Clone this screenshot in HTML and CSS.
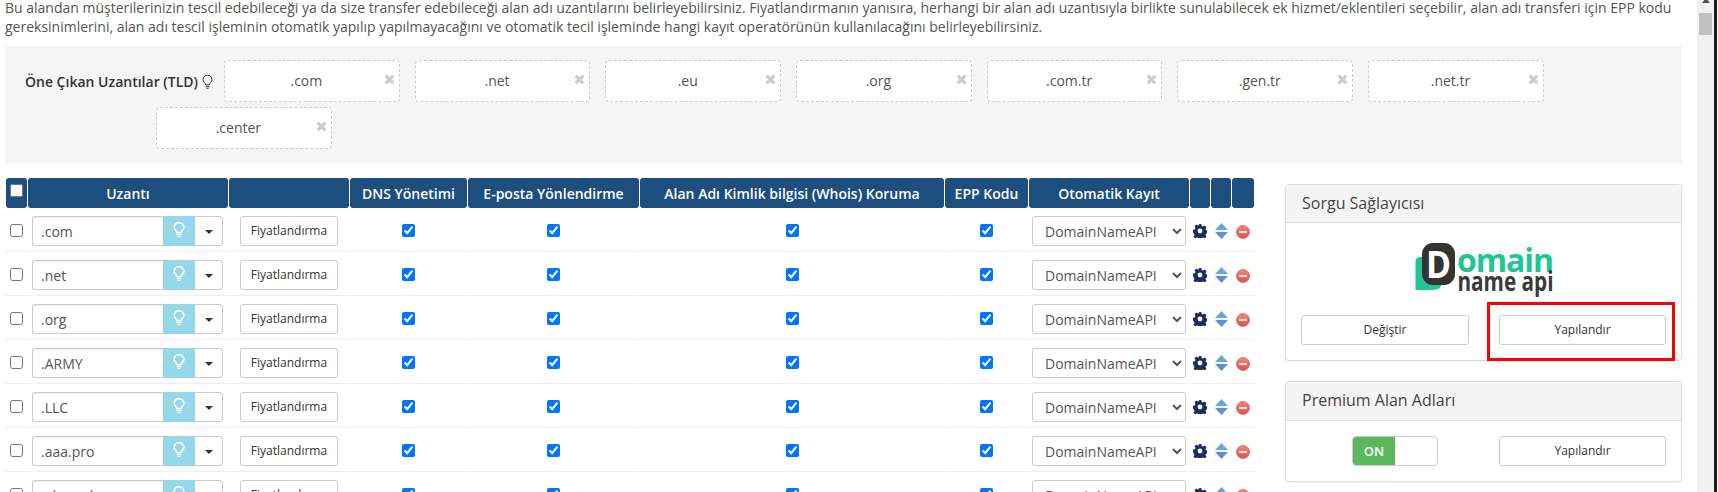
FILE: index.html
```html
<!DOCTYPE html>
<html lang="tr">
<head>
    <meta charset="UTF-8">
    <title>Alan Adı Fiyatlandırma</title>
    <link rel="stylesheet" href="styles.css">
</head>
<body>

<svg class="icon-defs" width="0" height="0">
    <defs>
        <linearGradient id="g-remove" x1="0" y1="0" x2="0" y2="1">
            <stop offset="0" stop-color="#ef8a80"/>
            <stop offset="1" stop-color="#dc5047"/>
        </linearGradient>
    </defs>
    <symbol id="i-bulb" viewBox="0 0 14 18">
        <path d="M4.600 12.200C4.400 10 1.400 9 1.400 6a5.600 5.600 0 0 1 11.200 0c0 3-3 4-3.200 6.200z" fill="none" stroke="currentColor" stroke-width="1.900"/>
        <path d="M4.400 13.600h5.200v1.500H4.400zM5.400 16h3.200v1.200H5.400z" fill="currentColor"/>
    </symbol>
    <symbol id="i-bulb-thin" viewBox="0 0 14 20">
        <path d="M4.600 13.200C4.400 10.500 1 9.500 1 6.200a6 6 0 0 1 12 0c0 3.300-3.400 4.300-3.600 7z" fill="none" stroke="currentColor" stroke-width="1.300"/>
        <path d="M4.600 15h4.800v1.300H4.600zM5.500 17.500h3v1.300h-3z" fill="currentColor"/>
    </symbol>
    <symbol id="i-gear" viewBox="0 0 14 14">
        <path d="M5.700 0h2.600l.4 1.900 1.300.6 1.700-1 1.800 1.800-1 1.700.6 1.300 1.900.4v2.600l-1.900.4-.6 1.300 1 1.700-1.800 1.800-1.700-1-1.300.6-.4 1.900H5.700l-.4-1.900-1.300-.6-1.700 1-1.800-1.800 1-1.700-.6-1.300L0 8.300V5.700l1.900-.4.6-1.300-1-1.700 1.800-1.800 1.700 1 1.300-.6zM7 4.600a2.400 2.400 0 1 0 0 4.800a2.400 2.400 0 0 0 0-4.800z" fill="#1b2d66" fill-rule="evenodd"/>
    </symbol>
    <symbol id="i-sort" viewBox="0 0 13 16">
        <path d="M6.500 0L13 7H0z" fill="#6aa6de"/>
        <path d="M0 9h13l-6.500 7z" fill="#5a93cc"/>
    </symbol>
    <symbol id="i-remove" viewBox="0 0 14 14">
        <circle cx="7" cy="7" r="6.500" fill="url(#g-remove)" stroke="#d9655c" stroke-width="0.800"/>
        <path d="M3.200 6h7.600v2H3.200z" fill="#fbe9e7"/>
    </symbol>
    <symbol id="i-close" viewBox="0 0 10 10">
        <path d="M1.500 1.500l7 7M8.500 1.500l-7 7" stroke="#ccc" stroke-width="3" fill="none"/>
    </symbol>
</svg>

<div class="layout">
<div class="page">

    <p class="intro">Bu alandan müşterilerinizin tescil edebileceği ya da size transfer edebileceği alan adı uzantılarını belirleyebilirsiniz. Fiyatlandırmanın yanısıra, herhangi bir alan adı uzantısıyla birlikte sunulabilecek ek hizmet/eklentileri seçebilir, alan adı transferi için EPP kodu gereksinimlerini, alan adı tescil işleminin otomatik yapılıp yapılmayacağını ve otomatik tecil işleminde hangi kayıt operatörünün kullanılacağını belirleyebilirsiniz.</p>

    <div class="tld-box">
        <div class="tld-label">Öne Çıkan Uzantılar (TLD) <svg class="tld-bulb"><use href="#i-bulb-thin"/></svg></div>
        <div class="tag">.com<svg class="tag-x"><use href="#i-close"/></svg></div>
        <div class="tag">.net<svg class="tag-x"><use href="#i-close"/></svg></div>
        <div class="tag">.eu<svg class="tag-x"><use href="#i-close"/></svg></div>
        <div class="tag">.org<svg class="tag-x"><use href="#i-close"/></svg></div>
        <div class="tag">.com.tr<svg class="tag-x"><use href="#i-close"/></svg></div>
        <div class="tag">.gen.tr<svg class="tag-x"><use href="#i-close"/></svg></div>
        <div class="tag">.net.tr<svg class="tag-x"><use href="#i-close"/></svg></div>
        <div class="tag tag-wrapped">.center<svg class="tag-x"><use href="#i-close"/></svg></div>
    </div>

    <div class="content">
        <table class="tld-table">
            <colgroup>
                <col class="c-check"><col class="c-ext"><col class="c-price"><col class="c-dns"><col class="c-mail"><col class="c-whois"><col class="c-epp"><col class="c-auto"><col class="c-ic"><col class="c-ic"><col class="c-ic-last">
            </colgroup>
            <thead>
            <tr>
                <th><input class="check" type="checkbox"></th>
                <th>Uzantı</th>
                <th></th>
                <th>DNS Yönetimi</th>
                <th>E-posta Yönlendirme</th>
                <th>Alan Adı Kimlik bilgisi (Whois) Koruma</th>
                <th>EPP Kodu</th>
                <th>Otomatik Kayıt</th>
                <th></th>
                <th></th>
                <th></th>
            </tr>
            </thead>
            <tbody>
            <tr>
                <td class="td-mid"><input class="check" type="checkbox"></td>
                <td><div class="ext-group"><input class="ext-input" type="text" value=".com"><span class="ext-bulb"><svg><use href="#i-bulb"/></svg></span><span class="ext-caret"></span></div></td>
                <td><div class="btn btn-price">Fiyatlandırma</div></td>
                <td class="td-mid"><input class="check" type="checkbox" checked></td>
                <td class="td-mid"><input class="check" type="checkbox" checked></td>
                <td class="td-mid"><input class="check" type="checkbox" checked></td>
                <td class="td-mid"><input class="check" type="checkbox" checked></td>
                <td><select class="registrar"><option>DomainNameAPI</option></select></td>
                <td class="td-mid"><svg class="ic ic-gear"><use href="#i-gear"/></svg></td>
                <td class="td-mid"><svg class="ic ic-sort"><use href="#i-sort"/></svg></td>
                <td class="td-mid"><svg class="ic ic-remove"><use href="#i-remove"/></svg></td>
            </tr>
            <tr>
                <td class="td-mid"><input class="check" type="checkbox"></td>
                <td><div class="ext-group"><input class="ext-input" type="text" value=".net"><span class="ext-bulb"><svg><use href="#i-bulb"/></svg></span><span class="ext-caret"></span></div></td>
                <td><div class="btn btn-price">Fiyatlandırma</div></td>
                <td class="td-mid"><input class="check" type="checkbox" checked></td>
                <td class="td-mid"><input class="check" type="checkbox" checked></td>
                <td class="td-mid"><input class="check" type="checkbox" checked></td>
                <td class="td-mid"><input class="check" type="checkbox" checked></td>
                <td><select class="registrar"><option>DomainNameAPI</option></select></td>
                <td class="td-mid"><svg class="ic ic-gear"><use href="#i-gear"/></svg></td>
                <td class="td-mid"><svg class="ic ic-sort"><use href="#i-sort"/></svg></td>
                <td class="td-mid"><svg class="ic ic-remove"><use href="#i-remove"/></svg></td>
            </tr>
            <tr>
                <td class="td-mid"><input class="check" type="checkbox"></td>
                <td><div class="ext-group"><input class="ext-input" type="text" value=".org"><span class="ext-bulb"><svg><use href="#i-bulb"/></svg></span><span class="ext-caret"></span></div></td>
                <td><div class="btn btn-price">Fiyatlandırma</div></td>
                <td class="td-mid"><input class="check" type="checkbox" checked></td>
                <td class="td-mid"><input class="check" type="checkbox" checked></td>
                <td class="td-mid"><input class="check" type="checkbox" checked></td>
                <td class="td-mid"><input class="check" type="checkbox" checked></td>
                <td><select class="registrar"><option>DomainNameAPI</option></select></td>
                <td class="td-mid"><svg class="ic ic-gear"><use href="#i-gear"/></svg></td>
                <td class="td-mid"><svg class="ic ic-sort"><use href="#i-sort"/></svg></td>
                <td class="td-mid"><svg class="ic ic-remove"><use href="#i-remove"/></svg></td>
            </tr>
            <tr>
                <td class="td-mid"><input class="check" type="checkbox"></td>
                <td><div class="ext-group"><input class="ext-input" type="text" value=".ARMY"><span class="ext-bulb"><svg><use href="#i-bulb"/></svg></span><span class="ext-caret"></span></div></td>
                <td><div class="btn btn-price">Fiyatlandırma</div></td>
                <td class="td-mid"><input class="check" type="checkbox" checked></td>
                <td class="td-mid"><input class="check" type="checkbox" checked></td>
                <td class="td-mid"><input class="check" type="checkbox" checked></td>
                <td class="td-mid"><input class="check" type="checkbox" checked></td>
                <td><select class="registrar"><option>DomainNameAPI</option></select></td>
                <td class="td-mid"><svg class="ic ic-gear"><use href="#i-gear"/></svg></td>
                <td class="td-mid"><svg class="ic ic-sort"><use href="#i-sort"/></svg></td>
                <td class="td-mid"><svg class="ic ic-remove"><use href="#i-remove"/></svg></td>
            </tr>
            <tr>
                <td class="td-mid"><input class="check" type="checkbox"></td>
                <td><div class="ext-group"><input class="ext-input" type="text" value=".LLC"><span class="ext-bulb"><svg><use href="#i-bulb"/></svg></span><span class="ext-caret"></span></div></td>
                <td><div class="btn btn-price">Fiyatlandırma</div></td>
                <td class="td-mid"><input class="check" type="checkbox" checked></td>
                <td class="td-mid"><input class="check" type="checkbox" checked></td>
                <td class="td-mid"><input class="check" type="checkbox" checked></td>
                <td class="td-mid"><input class="check" type="checkbox" checked></td>
                <td><select class="registrar"><option>DomainNameAPI</option></select></td>
                <td class="td-mid"><svg class="ic ic-gear"><use href="#i-gear"/></svg></td>
                <td class="td-mid"><svg class="ic ic-sort"><use href="#i-sort"/></svg></td>
                <td class="td-mid"><svg class="ic ic-remove"><use href="#i-remove"/></svg></td>
            </tr>
            <tr>
                <td class="td-mid"><input class="check" type="checkbox"></td>
                <td><div class="ext-group"><input class="ext-input" type="text" value=".aaa.pro"><span class="ext-bulb"><svg><use href="#i-bulb"/></svg></span><span class="ext-caret"></span></div></td>
                <td><div class="btn btn-price">Fiyatlandırma</div></td>
                <td class="td-mid"><input class="check" type="checkbox" checked></td>
                <td class="td-mid"><input class="check" type="checkbox" checked></td>
                <td class="td-mid"><input class="check" type="checkbox" checked></td>
                <td class="td-mid"><input class="check" type="checkbox" checked></td>
                <td><select class="registrar"><option>DomainNameAPI</option></select></td>
                <td class="td-mid"><svg class="ic ic-gear"><use href="#i-gear"/></svg></td>
                <td class="td-mid"><svg class="ic ic-sort"><use href="#i-sort"/></svg></td>
                <td class="td-mid"><svg class="ic ic-remove"><use href="#i-remove"/></svg></td>
            </tr>
            <tr>
                <td class="td-mid"><input class="check" type="checkbox"></td>
                <td><div class="ext-group"><input class="ext-input" type="text" value=".abogado"><span class="ext-bulb"><svg><use href="#i-bulb"/></svg></span><span class="ext-caret"></span></div></td>
                <td><div class="btn btn-price">Fiyatlandırma</div></td>
                <td class="td-mid"><input class="check" type="checkbox" checked></td>
                <td class="td-mid"><input class="check" type="checkbox" checked></td>
                <td class="td-mid"><input class="check" type="checkbox" checked></td>
                <td class="td-mid"><input class="check" type="checkbox" checked></td>
                <td><select class="registrar"><option>DomainNameAPI</option></select></td>
                <td class="td-mid"><svg class="ic ic-gear"><use href="#i-gear"/></svg></td>
                <td class="td-mid"><svg class="ic ic-sort"><use href="#i-sort"/></svg></td>
                <td class="td-mid"><svg class="ic ic-remove"><use href="#i-remove"/></svg></td>
            </tr>
            </tbody>
        </table>

        <div class="side">
            <div class="panel">
                <div class="panel-title">Sorgu Sağlayıcısı</div>
                <div class="panel-body">
                    <svg class="logo" viewBox="0 0 140 54" width="140" height="54">
                        <path d="M1.500 19q0-5 5-5H28v24q0 9-9 9H1.500z" fill="#1fc592"/>
                        <rect x="8" y="0" width="33" height="42" rx="11" fill="#333"/>
                        <text class="logo-d" x="12" y="35" textLength="25" lengthAdjust="spacingAndGlyphs">D</text>
                        <text class="logo-main" x="43" y="29" textLength="97">omain</text>
                        <text class="logo-sub" x="43.500" y="47.500" textLength="96" lengthAdjust="spacingAndGlyphs">name api</text>
                    </svg>
                    <div class="btn-row">
                        <div class="btn">Değiştir</div>
                        <div class="btn">Yapılandır</div>
                    </div>
                </div>
                <div class="highlight"></div>
            </div>

            <div class="panel">
                <div class="panel-title panel-title-tall">Premium Alan Adları</div>
                <div class="panel-body">
                    <div class="btn-row">
                        <div class="toggle"><span class="toggle-on">ON</span></div>
                        <div class="btn">Yapılandır</div>
                    </div>
                </div>
            </div>
        </div>
    </div>
</div>

<div class="scrollbar">
    <div class="scroll-up"></div>
    <div class="scroll-thumb"></div>
</div>
<div class="window-edge"></div>
</div>

</body>
</html>
```

FILE: styles.css
```css
body {
    margin: 0;
    padding: 0;
    background-color: white;
    overflow: hidden;
    height: 492px;
    font-family: "Open Sans", sans-serif;
    font-size: 14px;
    color: #555;
}

.icon-defs {
    display: block;
    height: 0;
}

.layout {
    display: flex;
    height: 492px;
    overflow: hidden;
}

.page {
    flex: 1;
    min-width: 0;
    padding-left: 5px;
    padding-right: 15px;
}

.intro {
    margin: -2px 0 0 0;
    height: 48px;
    line-height: 19px;
    color: #555;
}

/* featured tlds */
.tld-box {
    display: flex;
    flex-wrap: wrap;
    align-items: center;
    align-content: flex-start;
    column-gap: 15px;
    row-gap: 5px;
    height: 117px;
    box-sizing: border-box;
    padding: 14px 0 14px 20px;
    background-color: #f5f5f5;
}

.tld-label {
    width: 184px;
    font-weight: 600;
    color: #333;
    white-space: nowrap;
}

.tld-bulb {
    width: 11px;
    height: 15px;
    vertical-align: -3px;
    color: #333;
}

.tag {
    position: relative;
    width: 175.7px;
    height: 42px;
    line-height: 40px;
    box-sizing: border-box;
    padding-right: 11px;
    text-align: center;
    background-color: white;
    border: 1px dashed #ccc;
    border-radius: 4px;
}

.tag-wrapped {
    margin-left: 131px;
}

.tag-x {
    position: absolute;
    right: 4px;
    top: 13px;
    width: 11px;
    height: 11px;
}

/* main table + side panels */
.content {
    display: flex;
    align-items: flex-start;
    margin-top: 14px;
}

.tld-table {
    table-layout: fixed;
    width: 1250px;
    flex: none;
    border-collapse: separate;
    border-spacing: 1px;
}

.c-check { width: 21px; }
.c-ext { width: 200px; }
.c-price { width: 120px; }
.c-dns { width: 117px; }
.c-mail { width: 171px; }
.c-whois { width: 304px; }
.c-epp { width: 83px; }
.c-auto { width: 160px; }
.c-ic { width: 20px; }
.c-ic-last { width: 22px; }

.tld-table th {
    height: 30px;
    padding: 0;
    text-align: center;
    font-size: 14px;
    font-weight: 600;
    color: white;
    background-color: #1c4e80;
    border-radius: 3px;
}

.tld-table td {
    height: 43px;
    box-sizing: border-box;
    padding: 7px 3px 0 3px;
    vertical-align: top;
    border-bottom: 1px solid #eee;
}

.tld-table td.td-mid {
    padding: 15px 0 0 0;
    text-align: center;
}

.check {
    display: inline-block;
    margin: 0;
    vertical-align: top;
}

.ext-group {
    display: flex;
    width: 191px;
    height: 30px;
    margin-left: 1px;
}

.ext-input {
    width: 131px;
    height: 30px;
    box-sizing: border-box;
    padding: 0 8px;
    font-family: "Open Sans", sans-serif;
    font-size: 14px;
    color: #555;
    background-color: white;
    border: 1px solid #ccc;
    border-right: 0;
    border-radius: 3px 0 0 3px;
    box-shadow: inset 0 1px 1px rgba(0, 0, 0, 0.075);
    outline: none;
}

.ext-bulb {
    display: flex;
    align-items: center;
    justify-content: center;
    width: 32px;
    height: 30px;
    color: white;
    background-color: #96d7ea;
}

.ext-bulb svg {
    width: 12px;
    height: 16px;
    margin-bottom: 2px;
}

.ext-caret {
    position: relative;
    width: 28px;
    height: 30px;
    box-sizing: border-box;
    border: 1px solid #ccc;
    border-left: 0;
    border-radius: 0 4px 4px 0;
}

.ext-caret::after {
    content: "";
    position: absolute;
    left: 10px;
    top: 13px;
    border-top: 4px solid #333;
    border-left: 4px solid transparent;
    border-right: 4px solid transparent;
}

.btn {
    height: 30px;
    line-height: 28px;
    box-sizing: border-box;
    text-align: center;
    font-size: 12px;
    color: #333;
    background-color: white;
    border: 1px solid #ccc;
    border-radius: 3px;
}

.btn-price {
    width: 98px;
    margin-left: 8px;
}

.registrar {
    display: block;
    width: 154px;
    height: 30px;
    padding: 0 8px;
    font-family: "Open Sans", sans-serif;
    font-size: 14px;
    color: #555;
    background-color: white;
    border: 1px solid #ccc;
    border-radius: 3px;
}

.ic {
    display: inline-block;
    vertical-align: top;
}

.ic-gear {
    width: 14px;
    height: 14px;
}

.ic-sort {
    width: 13px;
    height: 16px;
    margin-top: -1px;
}

.ic-remove {
    width: 14px;
    height: 14px;
    margin-top: 1px;
}

.side {
    flex: none;
    width: 397px;
    margin-left: 30px;
    margin-top: 7px;
}

.panel {
    position: relative;
    box-sizing: border-box;
    margin-bottom: 20px;
    background-color: white;
    border: 1px solid #ddd;
    border-radius: 4px;
    box-shadow: 0 1px 1px rgba(0, 0, 0, 0.05);
}

.panel-title {
    height: 38px;
    line-height: 36px;
    box-sizing: border-box;
    padding-left: 16px;
    font-size: 16px;
    color: #444;
    background-color: #f4f4f4;
    border-bottom: 1px solid #ddd;
    border-radius: 3px 3px 0 0;
}

.panel-title-tall {
    height: 39px;
}

.panel-body {
    padding: 15px;
}

.logo {
    display: block;
    margin: 5px auto 18px auto;
    margin-top: 5px;
}

.logo-d {
    font-family: "Open Sans", sans-serif;
    font-size: 38px;
    font-weight: 700;
    fill: white;
}

.logo-main {
    font-family: "Open Sans", sans-serif;
    font-size: 32px;
    font-weight: 700;
    fill: #1fc592;
}

.logo-sub {
    font-family: "Open Sans", sans-serif;
    font-size: 26px;
    font-weight: 700;
    fill: #3a3a3a;
}

.btn-row {
    display: grid;
    grid-template-columns: 168px 167px;
    column-gap: 30px;
}

.highlight {
    position: absolute;
    left: 201px;
    top: 117px;
    width: 188px;
    height: 59px;
    box-sizing: border-box;
    border: 3px solid #f00;
}

.toggle {
    width: 86px;
    height: 30px;
    margin-left: 51px;
    box-sizing: border-box;
    overflow: hidden;
    background-color: white;
    border: 1px solid #ccc;
    border-radius: 4px;
}

.toggle-on {
    display: block;
    width: 42px;
    height: 28px;
    line-height: 28px;
    text-align: center;
    font-size: 13px;
    font-weight: 600;
    color: white;
    background-color: #5cb85c;
}

/* fake browser scrollbar */
.scrollbar {
    flex: none;
    width: 17px;
    height: 492px;
    background-color: #f1f1f1;
}

.scroll-up {
    width: 0;
    margin: -2px auto 0 auto;
    border-bottom: 5px solid #505050;
    border-left: 4px solid transparent;
    border-right: 4px solid transparent;
}

.scroll-thumb {
    height: 22px;
    margin: 10px 2px 0 2px;
    background-color: #c1c1c1;
}

.window-edge {
    flex: none;
    width: 3px;
    margin-right: 1px;
    background-color: #1e1e1e;
}
```
